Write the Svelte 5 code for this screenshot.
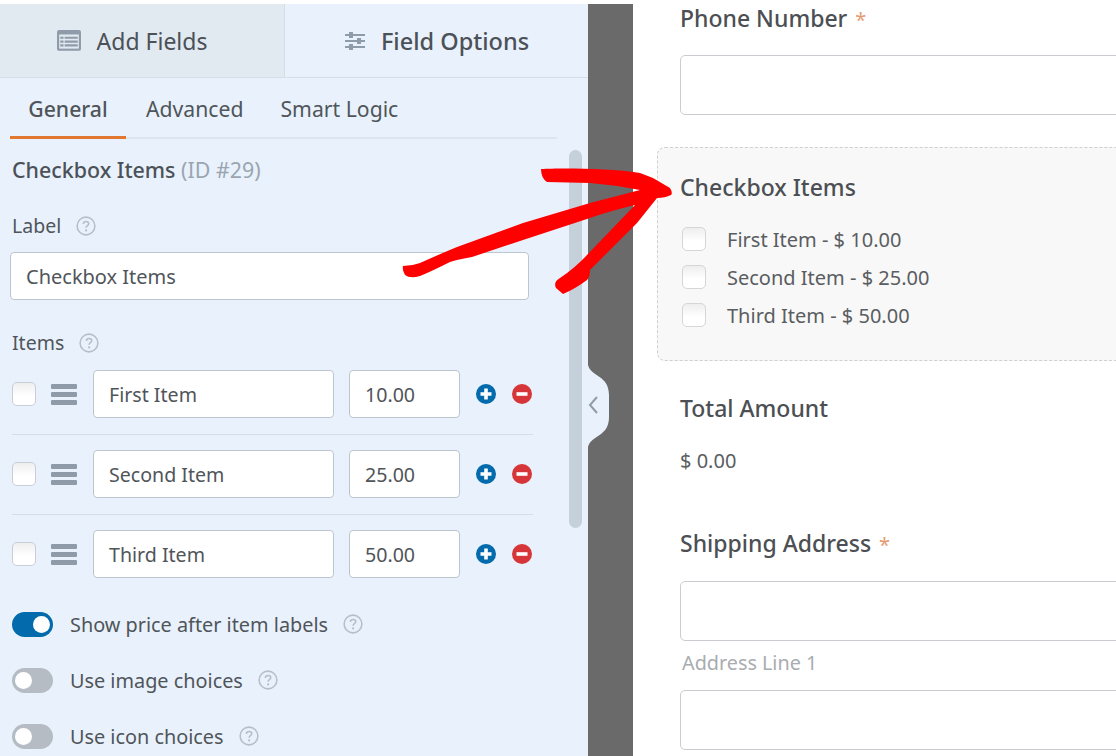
<script>
	const items = [
		{ name: 'First Item', price: '10.00' },
		{ name: 'Second Item', price: '25.00' },
		{ name: 'Third Item', price: '50.00' }
	];
	const toggles = [
		{ label: 'Show price after item labels', on: true },
		{ label: 'Use image choices', on: false },
		{ label: 'Use icon choices', on: false }
	];
</script>

{#snippet help()}
	<svg class="help" viewBox="0 0 18 18" width="20" height="20">
		<circle cx="9" cy="9" r="8" fill="none" stroke="#b6bfc8" stroke-width="1.4" />
		<path d="M6.6 7.2c0-1.4 1-2.3 2.5-2.3s2.4.9 2.4 2.1c0 1.7-2.4 1.8-2.4 3.5" fill="none" stroke="#b6bfc8" stroke-width="1.4" />
		<circle cx="9.1" cy="13" r="1" fill="#b6bfc8" />
	</svg>
{/snippet}

<div class="page">
	<aside class="panel">
		<div class="tabs">
			<div class="tab add">
				<svg viewBox="0 0 22 20" width="24" height="22">
					<rect x="0" y="0" width="22" height="19" rx="2" fill="#8f9ba8" />
					<rect x="2" y="4" width="18" height="13" fill="#e1e9f1" />
					<path d="M3 6h3v2H3zM7 6h12v2H7zM3 9.5h3v2H3zM7 9.5h12v2H7zM3 13h3v2H3zM7 13h12v2H7z" fill="#8f9ba8" />
				</svg>
				<span>Add Fields</span>
			</div>
			<div class="tab options">
				<svg viewBox="0 0 20 20" width="22" height="20">
					<path d="M0 3h20v2H0zM0 9h20v2H0zM0 15h20v2H0z" fill="#8f9ba8" />
					<path d="M4 1h4v6H4zM12 7h4v6h-4zM4 13h4v6H4z" fill="#8f9ba8" />
				</svg>
				<span>Field Options</span>
			</div>
		</div>

		<div class="subtabs">
			<span class="sub active">General</span>
			<span class="sub">Advanced</span>
			<span class="sub">Smart Logic</span>
		</div>

		<div class="body">
			<h3 class="field-title">Checkbox Items <span>(ID #29)</span></h3>

			<div class="label first">Label {@render help()}</div>
			<div class="input wide">Checkbox Items</div>

			<div class="label items-label">Items {@render help()}</div>
			<div class="items">
				{#each items as item}
					<div class="item">
						<span class="check small"></span>
						<span class="drag"><i></i><i></i><i></i></span>
						<div class="input name">{item.name}</div>
						<div class="input price">{item.price}</div>
						<svg class="round" viewBox="0 0 20 20" width="20" height="20">
							<circle cx="10" cy="10" r="10" fill="#036aab" />
							<path d="M8.2 4.5h3.6v3.7h3.7v3.6h-3.7v3.7H8.2v-3.7H4.5V8.2h3.7z" fill="#fff" />
						</svg>
						<svg class="round" viewBox="0 0 20 20" width="20" height="20">
							<circle cx="10" cy="10" r="10" fill="#d63638" />
							<rect x="4.5" y="8.2" width="11" height="3.6" fill="#fff" />
						</svg>
					</div>
				{/each}
			</div>

			<div class="toggles">
				{#each toggles as toggle}
					<div class="toggle-row">
						<span class="toggle" class:on={toggle.on}><b></b></span>
						<span class="toggle-label">{toggle.label}</span>
						{@render help()}
					</div>
				{/each}
			</div>
		</div>

		<div class="scrollbar"></div>
	</aside>

	<div class="gutter">
		<svg class="handle" viewBox="0 0 22 82" width="22" height="82">
			<path d="M0 0C3 12 21 10 21 30V52C21 72 3 70 0 82z" fill="#e9f2fc" />
			<path d="M9 32L2 40L9 48" fill="none" stroke="#8f9ba8" stroke-width="2" />
		</svg>
	</div>

	<main class="preview">
		<div class="field phone">
			<div class="title">Phone Number <em>*</em></div>
			<div class="box"></div>
		</div>

		<div class="selected">
			<div class="title">Checkbox Items</div>
			<ul>
				<li><span class="check"></span>First Item - $ 10.00</li>
				<li><span class="check"></span>Second Item - $ 25.00</li>
				<li><span class="check"></span>Third Item - $ 50.00</li>
			</ul>
		</div>

		<div class="field total">
			<div class="title">Total Amount</div>
			<div class="amount">$ 0.00</div>
		</div>

		<div class="field shipping">
			<div class="title">Shipping Address <em>*</em></div>
			<div class="box"></div>
			<div class="sublabel">Address Line 1</div>
			<div class="box"></div>
		</div>
	</main>

	<svg class="arrow" viewBox="0 0 1116 756" width="1116" height="756">
		<path
			d="M541 169C560 168 610 168 640 173L653 178L670 188Q673 193 671 195Q665 198 657 198L637 223L590 270Q590 277 587 280Q575 289 563 294L556 288Q553 282 560 278Q575 268 587 255L635 205Q610 211 590 218L523 240L472 257Q455 260 450 262Q430 272 420 276Q410 279 405 275Q402 270 403 266Q412 266 420 263Q440 254 457 247L523 223L590 203L640 190Q615 185 590 183L547 182Q541 178 541 169Z"
			fill="#fe0000"
		/>
	</svg>
</div>

<style>
	:global(body) {
		overflow: hidden;
		background: #fff;
	}

	.page {
		position: relative;
		display: flex;
		width: 1116px;
		height: 756px;
		overflow: hidden;
		padding-top: 4px;
		box-sizing: border-box;
		font-family: 'Noto Sans', 'Open Sans', sans-serif;
		color: #50555a;
	}

	.panel {
		position: relative;
		width: 588px;
		flex: none;
		background: #e9f2fc;
	}

	.tabs {
		display: flex;
		height: 74px;
		border-bottom: 1px solid #d5dde6;
		box-sizing: border-box;
	}

	.tab {
		display: flex;
		align-items: center;
		justify-content: center;
		font-size: 23px;
		color: #4c5157;
	}

	.add {
		width: 285px;
		gap: 16px;
		padding-right: 20px;
		background: #e1e9f1;
		border-right: 1px solid #d5dde6;
		box-sizing: border-box;
	}

	.options {
		flex: 1;
		gap: 15px;
		font-weight: 500;
		font-size: 23.5px;
	}

	.subtabs {
		display: flex;
		margin: 0 31px 0 10px;
		height: 61px;
		border-bottom: 2px solid #dde5ee;
		box-sizing: border-box;
	}

	.sub {
		font-size: 21.2px;
		line-height: 61px;
		margin-right: 37px;
	}

	.sub.active {
		width: 116px;
		margin-right: 20px;
		height: 61px;
		text-align: center;
		font-weight: 500;
		border-bottom: 3px solid #e27730;
		box-sizing: border-box;
	}

	.body {
		padding: 17px 0 0 12px;
	}

	.field-title {
		margin: 0;
		font-size: 21.4px;
		line-height: 28px;
		font-weight: 500;
		color: #4c5157;
	}

	.field-title span {
		font-weight: 400;
		color: #9aa5b1;
	}

	.label {
		display: flex;
		align-items: center;
		gap: 15px;
		font-size: 19.5px;
		line-height: 26px;
	}

	.label.first {
		margin-top: 29px;
	}

	.items-label {
		margin-top: 30px;
	}

	.input {
		box-sizing: border-box;
		height: 48px;
		padding-left: 15px;
		background: #fff;
		border: 1px solid #bcc6d0;
		border-radius: 4px;
		font-size: 19.6px;
		line-height: 48px;
		color: #50555a;
	}

	.wide {
		width: 519px;
		margin: 13px 0 0 -2px;
		font-size: 20px;
	}

	.items {
		width: 521px;
		margin-top: 14px;
	}

	.item {
		display: flex;
		align-items: center;
		height: 48px;
		padding-bottom: 16px;
		margin-bottom: 15px;
		border-bottom: 1px solid #d5dde6;
	}

	.item:last-child {
		border-bottom: none;
	}

	.check {
		display: block;
		flex: none;
		box-sizing: border-box;
		width: 24px;
		height: 24px;
		border: 1px solid #d4d6d8;
		border-radius: 5px;
		background: linear-gradient(#eeeeee, #fff 60%);
	}

	.check.small {
		border-color: #c6ced6;
	}

	.drag {
		display: flex;
		flex: none;
		flex-direction: column;
		gap: 3px;
		width: 26px;
		margin: 0 16px 0 15px;
	}

	.drag i {
		display: block;
		height: 5px;
		background: #8f9ba8;
		border-radius: 1px;
	}

	.name {
		flex: none;
		width: 241px;
		margin-right: 15px;
	}

	.price {
		flex: none;
		width: 111px;
		margin-right: 16px;
	}

	.round {
		flex: none;
		margin-right: 16px;
		margin-top: -1px;
	}

	.round:last-child {
		margin-right: 0;
	}

	.toggles {
		margin-top: -13px;
	}

	.toggle-row {
		display: flex;
		align-items: center;
		height: 56px;
		font-size: 19.85px;
	}

	.toggle {
		display: block;
		position: relative;
		width: 41px;
		height: 25px;
		margin-right: 17px;
		border-radius: 13px;
		background: #b5bcc4;
	}

	.toggle b {
		position: absolute;
		top: 4px;
		left: 3px;
		width: 17px;
		height: 17px;
		border-radius: 50%;
		background: #fff;
	}

	.toggle.on {
		background: #036aab;
	}

	.toggle.on b {
		left: 21px;
	}

	.toggle-label {
		margin-right: 15px;
	}

	.scrollbar {
		position: absolute;
		left: 569px;
		top: 146px;
		width: 13px;
		height: 378px;
		border-radius: 7px;
		background: #c6d0da;
	}

	.gutter {
		position: relative;
		width: 45px;
		flex: none;
		background: #6a6a6a;
	}

	.handle {
		position: absolute;
		left: 0;
		top: 361px;
	}

	.preview {
		flex: none;
		width: 483px;
		position: relative;
	}

	.title {
		font-size: 23px;
		line-height: 28px;
		font-weight: 500;
		color: #4c4f53;
	}

	.title em {
		font-style: normal;
		font-weight: 400;
		font-size: 20px;
		line-height: 0;
		color: #e59a72;
		margin-left: 2px;
	}

	.field {
		padding-left: 47px;
	}

	.box {
		box-sizing: border-box;
		width: 520px;
		height: 60px;
		margin-top: 23px;
		background: #fff;
		border: 1px solid #c9ccd0;
		border-radius: 5px;
	}

	.selected {
		box-sizing: border-box;
		margin: 32px 0 0 24px;
		width: 520px;
		height: 214px;
		padding: 25px 0 0 22px;
		background: #f8f8f8;
		border: 1px dashed #cfcfcf;
		border-radius: 8px;
	}

	.selected ul {
		list-style: none;
		margin: 19px 0 0;
		padding: 0;
	}

	.selected li {
		display: flex;
		align-items: center;
		height: 38px;
		font-size: 20px;
		color: #5a5d61;
	}

	.selected .check {
		margin: 0 21px 0 2px;
	}

	.total {
		margin-top: 33px;
	}

	.amount {
		margin-top: 25px;
		font-size: 20px;
		line-height: 28px;
		color: #5a5d61;
	}

	.shipping {
		margin-top: 54px;
	}

	.shipping .title + .box {
		margin-top: 24px;
	}

	.sublabel {
		margin: 9px 0 14px 2px;
		font-size: 19.8px;
		line-height: 26px;
		color: #a9acb0;
	}

	.shipping .sublabel + .box {
		margin-top: 0;
	}

	.arrow {
		position: absolute;
		left: 0;
		top: 0;
		pointer-events: none;
	}
</style>
